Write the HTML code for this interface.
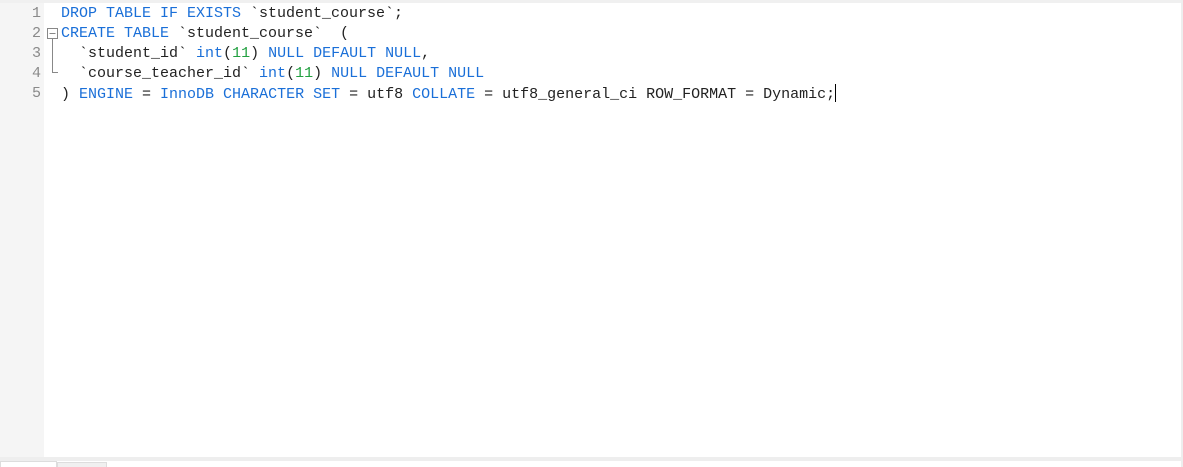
<!DOCTYPE html>
<html><head><style>
body{margin:0;width:1183px;height:467px;background:#fff;position:relative;overflow:hidden;font-family:"Liberation Mono",monospace;}
.gut{position:absolute;left:0;top:3px;width:44px;height:454px;background:#f5f5f5;}
.top{position:absolute;left:0;top:0;width:1183px;height:3px;background:#f0f0f0;}
.right{position:absolute;left:1181px;top:0;width:2px;height:467px;background:#eee;}
.bot{position:absolute;left:0;top:457px;width:1181px;height:4px;background:#eeeeee;}
.tab1{position:absolute;left:0;top:461px;width:57px;height:6px;border:1px solid #ddd;border-bottom:none;box-sizing:border-box;background:#fff}
.tab2{position:absolute;left:57px;top:462px;width:50px;height:5px;border:1px solid #ddd;border-bottom:none;box-sizing:border-box;background:#f0f0f0}
.ln{position:absolute;left:0;width:41px;text-align:right;color:#8a8a8a;font-size:15px;line-height:20px}
.code{position:absolute;left:61px;font-size:15px;line-height:20px;color:#222;white-space:pre}
.k{color:#1a6fd8}.n{color:#22a040}
.cur{display:inline-block;width:1px;height:18px;background:#000;vertical-align:-4px}
</style></head><body>
<div class="top"></div><div class="gut"></div><div class="right"></div><div class="bot"></div>
<div class="tab1"></div><div class="tab2"></div>
<div class="ln" style="top:4px">1<br>2<br>3<br>4<br>5</div>
<svg style="position:absolute;left:0;top:0" width="70" height="100">
<rect x="47.5" y="28.5" width="10" height="10" fill="#fff" stroke="#888"/>
<line x1="49.5" y1="33.5" x2="55.5" y2="33.5" stroke="#888"/>
<path d="M52.5 38.5V72.5H58" fill="none" stroke="#888"/>
</svg>
<div class="code" style="top:4px"><span class="k">DROP TABLE IF EXISTS</span> `student_course`;
<span class="k">CREATE TABLE</span> `student_course`  (
  `student_id` <span class="k">int</span>(<span class="n">11</span>) <span class="k">NULL DEFAULT NULL</span>,
  `course_teacher_id` <span class="k">int</span>(<span class="n">11</span>) <span class="k">NULL DEFAULT NULL</span>
) <span class="k">ENGINE</span> = <span class="k">InnoDB CHARACTER SET</span> = utf8 <span class="k">COLLATE</span> = utf8_general_ci ROW_FORMAT = Dynamic;<span class="cur"></span></div>
</body></html>
